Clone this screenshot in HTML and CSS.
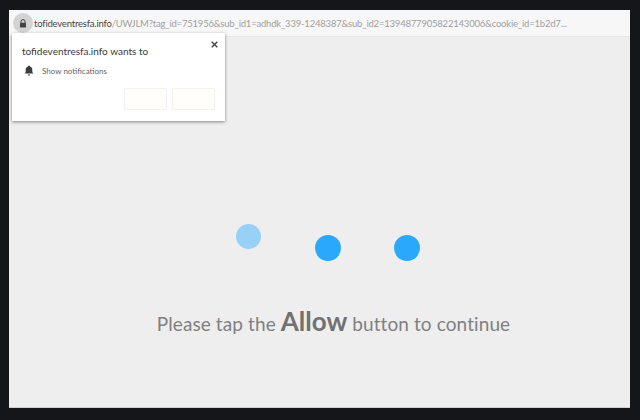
FILE: index.html
```html
<!DOCTYPE html>
<html lang="en">
  <head>
    <meta charset="UTF-8" />
    <title>Please tap the Allow button</title>
    <link rel="stylesheet" href="styles.css">
  </head>
  <body>
    <div class="window">
      <div class="address-bar">
        <span class="lock-badge">
          <svg width="8" height="9" viewBox="0 0 8 9">
            <path d="M2 4V2.6a2 2 0 0 1 4 0V4" fill="none" stroke="#444" stroke-width="1"/>
            <rect x="1" y="3.8" width="6" height="4.7" rx="0.6" fill="#444"/>
          </svg>
        </span>
        <span class="url"><span class="domain">tofideventresfa.info</span>/UWJLM?tag_id=751956&amp;sub_id1=adhdk_339-1248387&amp;sub_id2=1394877905822143006&amp;cookie_id=1b2d7...</span>
      </div>
      <div class="content">
        <div class="dots">
          <div class="dot dot-faded"></div>
          <div class="dot"></div>
          <div class="dot"></div>
        </div>
        <p class="message">Please tap the <b>Allow</b> button to continue</p>
      </div>

      <div class="popup">
        <div class="popup-close">
          <svg width="7" height="7" viewBox="0 0 7 7">
            <path d="M0.7 0.7L6.3 6.3M6.3 0.7L0.7 6.3" stroke="#444" stroke-width="1.4"/>
          </svg>
        </div>
        <div class="popup-title">tofideventresfa.info wants to</div>
        <div class="popup-row">
          <svg width="10" height="11" viewBox="0 0 10 11">
            <path d="M5 0.5a1 1 0 0 1 1 1c1.7.5 2.3 1.8 2.3 3.4v2.4l1.2 1.2H0.5l1.2-1.2V4.9c0-1.6.6-2.9 2.3-3.4a1 1 0 0 1 1-1z" fill="#3c3c3c"/>
            <path d="M3.8 9.4h2.4a1.2 1.2 0 0 1-2.4 0z" fill="#3c3c3c"/>
          </svg>
          <span>Show notifications</span>
        </div>
        <div class="popup-buttons">
          <div class="popup-button"></div>
          <div class="popup-button"></div>
        </div>
      </div>
    </div>
  </body>
</html>
```

FILE: styles.css
```css
html,
body {
  height: 100%;
}
body {
  margin: 0;
  padding: 10px 10px 13px 9px;
  box-sizing: border-box;
  background-color: #141619;
  font-family: Lato, Arial, sans-serif;
  overflow: hidden;
}
.window {
  position: relative;
  height: 100%;
  display: flex;
  flex-direction: column;
  background-color: #eeeeee;
  border-bottom: 1px solid #d0d0d0;
}
.address-bar {
  height: 26px;
  display: flex;
  align-items: center;
  background-color: #f7f7f7;
  border-bottom: 1px solid #e6e6e6;
  white-space: nowrap;
  overflow: hidden;
}
.lock-badge {
  width: 20px;
  height: 20px;
  margin-left: 4px;
  display: flex;
  align-items: center;
  justify-content: center;
  flex-shrink: 0;
  border-radius: 50%;
  background-color: #d3d3d3;
}
.url {
  margin-left: 1px;
  font-size: 9.5px;
  letter-spacing: -0.2px;
  color: #a0a0a0;
}
.domain {
  color: #484848;
}
.content {
  flex: 1;
  display: flex;
  flex-direction: column;
  align-items: center;
}
.dots {
  margin-top: 187px;
  margin-left: 16px;
  display: flex;
  align-items: flex-end;
  gap: 53px;
}
.dot {
  width: 26px;
  height: 26px;
  border-radius: 50%;
  background-color: #2aa8fb;
}
.dot-faded {
  width: 25px;
  height: 25px;
  margin-right: 1px;
  margin-bottom: 12px;
  background-color: #97d1f7;
}
.message {
  margin: 43px 0 0 28px;
  font-size: 19px;
  letter-spacing: 0.1px;
  line-height: 34px;
  color: #808080;
}
.message b {
  font-size: 26px;
  font-weight: 700;
  letter-spacing: 0;
  color: #717171;
}
.popup {
  position: absolute;
  left: 3px;
  top: 23px;
  width: 213px;
  height: 88px;
  background-color: #fff;
  box-shadow: 0 1px 3px rgba(0, 0, 0, 0.45);
}
.popup-close {
  position: absolute;
  top: 8px;
  right: 7px;
  line-height: 0;
}
.popup-title {
  margin: 11px 0 0 10px;
  font-size: 10px;
  line-height: 14px;
  color: #3a3a3a;
}
.popup-row {
  margin: 7px 0 0 12px;
  display: flex;
  align-items: center;
  gap: 8px;
  font-size: 8px;
  color: #666;
}
.popup-buttons {
  position: absolute;
  right: 10px;
  bottom: 11px;
  display: flex;
  gap: 5px;
}
.popup-button {
  width: 43px;
  height: 22px;
  box-sizing: border-box;
  border: 1px solid #f1f1f1;
  border-radius: 2px;
  background-color: #fffefb;
}
```
